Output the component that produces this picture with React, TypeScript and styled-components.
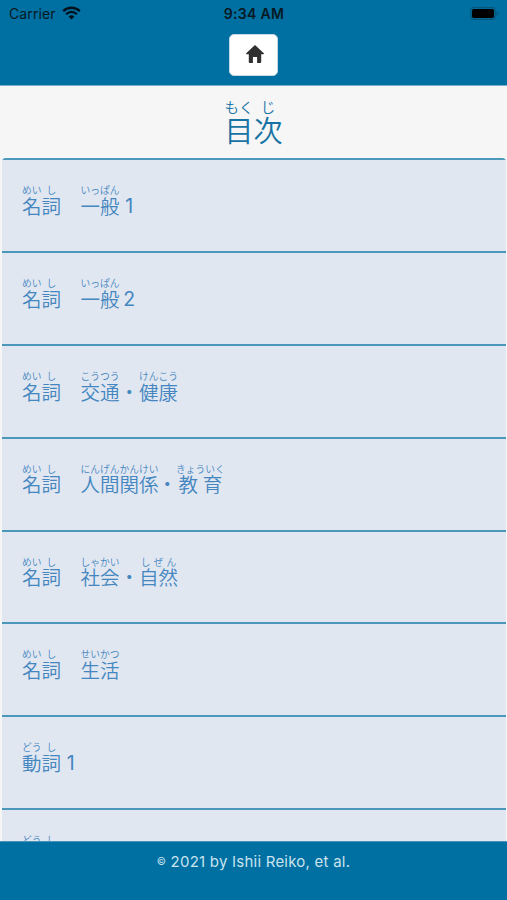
import React from "react";
import styled, { createGlobalStyle } from "styled-components";

const GlobalStyle = createGlobalStyle`
  * { box-sizing: border-box; }
  html, body { margin: 0; padding: 0; }
  body { background: #f6f6f7; overflow: hidden; }
`;

const Screen = styled.div`
  display: flex;
  flex-direction: column;
  width: 507px;
  height: 900px;
  overflow: hidden;
  background: #f6f6f7;
  font-family: "Noto Sans CJK JP", sans-serif;
`;

const Header = styled.header`
  flex: none;
  height: 86px;
  background: #006fa1;
  border-bottom: 1px solid #7aaeca;
`;

const StatusBar = styled.div`
  display: grid;
  grid-template-columns: 1fr auto 1fr;
  align-items: center;
  height: 28px;
  padding: 0 8px 0 9px;
  color: #071923;
  font-family: Inter, sans-serif;
  font-size: 14px;
  line-height: 28px;
`;

const Carrier = styled.div`
  display: flex;
  align-items: center;
  gap: 6px;
  letter-spacing: 0.1px;
  svg { margin-top: -3px; }
`;

const Clock = styled.div`
  font-weight: 600;
  font-size: 14px;
  letter-spacing: 0.3px;
`;

const Battery = styled.div`
  display: flex;
  justify-content: flex-end;
  margin-top: -2px;
`;

const HomeButton = styled.button`
  display: flex;
  align-items: center;
  justify-content: center;
  width: 49px;
  height: 42px;
  margin: 6px 0 0 229px;
  padding: 0 0 3px 2px;
  border: 1px solid #c5d9e4;
  border-radius: 5px;
  background: #fff;
`;

const Title = styled.h1`
  flex: none;
  display: flex;
  justify-content: center;
  height: 72px;
  margin: 0;
  padding-top: 14px;
  color: #1673a4;
  font-size: 29px;
  font-weight: 350;
`;

const List = styled.ul`
  flex: 1;
  min-height: 0;
  overflow: hidden;
  margin: 0 1px 0 2px;
  padding: 0;
  list-style: none;
  border-radius: 4px 4px 0 0;
`;

const Row = styled.li`
  display: flex;
  height: 92.9px;
  padding: 26px 0 0 20px;
  border-top: 2px solid #4c98bb;
  background: #e1e7f1;
  color: #4486bf;
  font-size: 19.5px;
  font-weight: 350;
`;

const Group = styled.span<{ $width: number }>`
  display: flex;
  flex-direction: column;
  align-items: center;
  flex: none;
  width: ${(p) => p.$width}em;
`;

const Reading = styled.span<{ $spacing?: number }>`
  height: 1em;
  font-size: 0.5em;
  line-height: 1em;
  white-space: nowrap;
  letter-spacing: ${(p) => p.$spacing ?? 0}em;
  margin-right: ${(p) => -(p.$spacing ?? 0)}em;
`;

const Base = styled.span<{ $latin?: boolean; $spacing?: number }>`
  line-height: 1em;
  white-space: nowrap;
  letter-spacing: ${(p) => p.$spacing ?? 0}em;
  margin-right: ${(p) => -(p.$spacing ?? 0)}em;
  ${(p) => p.$latin && `font-family: Inter, sans-serif; font-size: 1em; font-weight: 400; line-height: 1.1em;`}
`;

const Footer = styled.footer`
  flex: none;
  height: 59px;
  padding-top: 9px;
  border-top: 1px solid #4694ba;
  background: #006fa1;
  color: #c9e3ef;
  font-family: Inter, sans-serif;
  font-size: 15px;
  font-weight: 400;
  line-height: 20px;
  text-align: center;
  letter-spacing: 0.23px;
`;

const Copyright = styled.span`
  font-size: 10px;
  vertical-align: 1.5px;
`;

type Part = {
  text: string;
  reading?: string;
  width: number;
  spacing?: number;
  baseSpacing?: number;
};

const noun: Part[] = [
  { text: "名", reading: "めい", width: 1 },
  { text: "詞", reading: "し", width: 1 },
  { text: "\u3000", width: 1 },
];
const verb: Part[] = [
  { text: "動", reading: "どう", width: 1 },
  { text: "詞", reading: "し", width: 1 },
];
const digit = (text: string): Part => ({ text, width: 1 });
const dot: Part = { text: "・", width: 1 };

const rows: Part[][] = [
  [...noun, { text: "一般", reading: "いっぱん", width: 2 }, digit("1")],
  [...noun, { text: "一般", reading: "いっぱん", width: 2 }, digit("2")],
  [
    ...noun,
    { text: "交通", reading: "こうつう", width: 2 },
    dot,
    { text: "健康", reading: "けんこう", width: 2 },
  ],
  [
    ...noun,
    { text: "人間関係", reading: "にんげんかんけい", width: 4 },
    { ...dot, width: 0.9 },
    { text: "教育", reading: "きょういく", width: 2.5, baseSpacing: 0.25 },
  ],
  [
    ...noun,
    { text: "社会", reading: "しゃかい", width: 2 },
    dot,
    { text: "自然", reading: "しぜん", width: 2, spacing: 0.33 },
  ],
  [...noun, { text: "生活", reading: "せいかつ", width: 2 }],
  [...verb, digit("1")],
  [...verb, digit("2")],
];

const Furigana = ({ part }: { part: Part }) => (
  <Group $width={part.width}>
    <Reading $spacing={part.spacing}>{part.reading}</Reading>
    <Base $latin={/^\d$/.test(part.text)} $spacing={part.baseSpacing}>
      {part.text}
    </Base>
  </Group>
);

const WifiIcon = () => (
  <svg width="19" height="14" viewBox="0 0 19 14" fill="none" stroke="#00131d" strokeWidth="2.3">
    <path d="M1.2 5.1C5.8.6 13.2.6 17.8 5.1" />
    <path d="M4.1 8.2C7.1 5.2 11.9 5.2 14.9 8.2" />
    <path d="M9.5 13.5 6.5 10.6Q9.5 8 12.5 10.6Z" fill="#00131d" stroke="none" />
  </svg>
);

const BatteryIcon = () => (
  <svg width="29" height="13" viewBox="0 0 29 13">
    <rect x="0.8" y="0.6" width="24.4" height="11.8" rx="3.2" fill="none" stroke="#07577b" strokeWidth="1.2" />
    <rect x="2" y="2" width="22" height="9" rx="1.8" fill="#000" />
    <path d="M26.6 4.5q1.7.5 1.7 2t-1.7 2z" fill="#07577b" />
  </svg>
);

const HomeIcon = () => (
  <svg width="18" height="18" viewBox="0 0 18 18" fill="#303030">
    <path d="M9 0 .2 8.3q-.5.9.5.9H2.8v7.9q0 .9.9.9h3.2v-6h4.2v6h3.2q.9 0 .9-.9V9.2h2.1q1 0 .5-.9z" />
  </svg>
);

export default function App() {
  return (
    <>
      <GlobalStyle />
      <Screen>
        <Header>
          <StatusBar>
            <Carrier>
              Carrier <WifiIcon />
            </Carrier>
            <Clock>9:34 AM</Clock>
            <Battery>
              <BatteryIcon />
            </Battery>
          </StatusBar>
          <HomeButton aria-label="Home">
            <HomeIcon />
          </HomeButton>
        </Header>
        <Title>
          <Furigana part={{ text: "目", reading: "もく", width: 1 }} />
          <Furigana part={{ text: "次", reading: "じ", width: 1 }} />
        </Title>
        <List>
          {rows.map((parts, i) => (
            <Row key={i}>
              {parts.map((part, j) => (
                <Furigana key={j} part={part} />
              ))}
            </Row>
          ))}
        </List>
        <Footer>
          <Copyright>©</Copyright> 2021 by Ishii Reiko, et al.
        </Footer>
      </Screen>
    </>
  );
}
